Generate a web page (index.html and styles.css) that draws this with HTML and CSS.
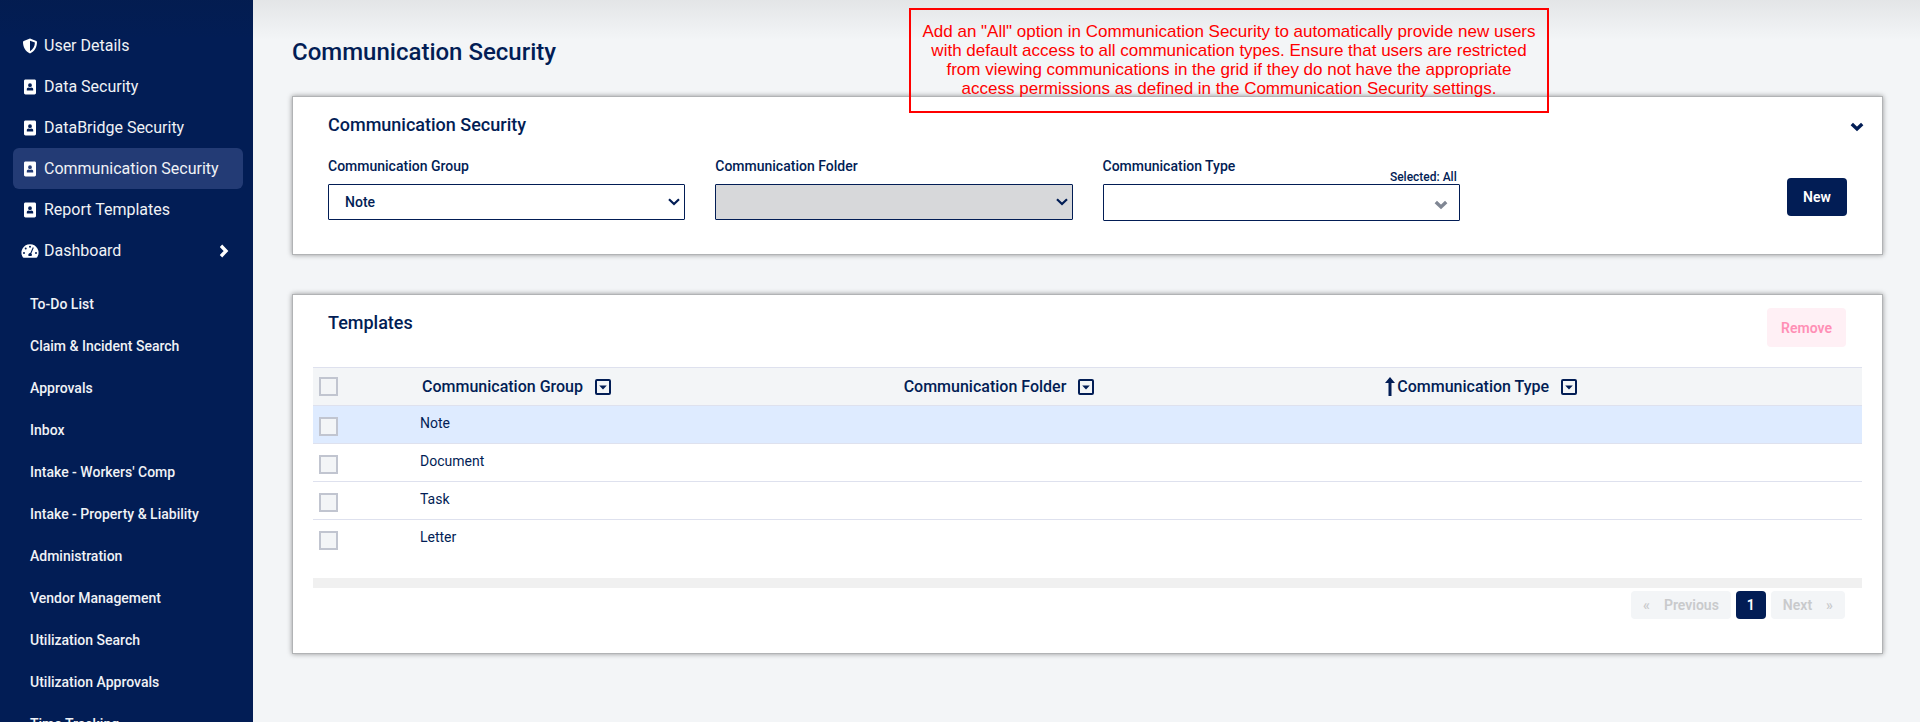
FILE: index.html
```html
<!DOCTYPE html>
<html lang="en">
<head>
<meta charset="utf-8">
<meta name="viewport" content="width=device-width, initial-scale=1">
<title>Communication Security</title>
<link rel="stylesheet" href="styles.css">
</head>
<body>
<svg class="sprite" aria-hidden="true">
  <symbol id="i-shield" viewBox="0 0 16 16"><path fill="currentColor" fill-rule="evenodd" d="M8 .5 14.300 3c.5.200.7.500.7 1 0 5-2.300 9.300-7 11.500C3.300 13.300 1 9 1 4c0-.5.2-.8.7-1zM8 2.700v10.600c3.200-1.800 4.800-5 4.900-8.700z"/></symbol>
  <symbol id="i-badge" viewBox="0 0 12 16"><path fill="currentColor" fill-rule="evenodd" d="M1.500.5h9c.8 0 1.500.6 1.500 1.400v12.200c0 .8-.7 1.400-1.500 1.400h-9C.7 15.500 0 14.900 0 14.100V1.900C0 1.100.7.500 1.500.500zM6 4.300a1.900 1.900 0 1 0 0 3.800 1.900 1.900 0 0 0 0-3.800zM4.800 8.600C3.500 8.600 2.800 9.400 2.800 10.400v1h6.400v-1c0-1-.7-1.800-2-1.800-.8.300-1.600.3-2.400 0z"/></symbol>
  <symbol id="i-gauge" viewBox="0 0 18 16"><path fill="currentColor" fill-rule="evenodd" d="M9 1.200a8.500 8.500 0 0 1 7.200 13c-.2.300-.5.500-.9.500H2.700c-.4 0-.7-.2-.9-.5A8.500 8.500 0 0 1 9 1.200zM9 2.800a1 1 0 1 0 0 2 1 1 0 0 0 0-2zM4.700 4.600a1 1 0 1 0 0 2 1 1 0 0 0 0-2zM3 8.900a1 1 0 1 0 0 2 1 1 0 0 0 0-2zM15 8.900a1 1 0 1 0 0 2 1 1 0 0 0 0-2zM11.800 4.300 9.300 10a2 2 0 0 0-1.700 3h2.900a2 2 0 0 0-.2-2.600l2.500-5.700z"/></symbol>
  <symbol id="i-chevron" viewBox="0 0 14 10"><path fill="none" stroke="currentColor" stroke-width="3.400" d="m1.800 2 5.200 5 5.200-5"/></symbol>
  <symbol id="i-filter" viewBox="0 0 16 16"><rect x="1" y="1" width="14" height="14" rx="1" fill="none" stroke="currentColor" stroke-width="2"/><path fill="currentColor" d="M4.200 6.500h7.600L8 10.500z"/></symbol>
  <symbol id="i-up" viewBox="0 0 10 20"><path fill="currentColor" d="M5 0 10 6H6.500v13h-3V6H0z"/></symbol>
</svg>
<div class="app">
  <aside class="sidebar">
    <nav class="nav" aria-label="Security">
      <a class="nav-link" href="#"><svg class="nav-icon"><use href="#i-shield"/></svg>User Details</a>
      <a class="nav-link" href="#"><svg class="nav-icon"><use href="#i-badge"/></svg>Data Security</a>
      <a class="nav-link" href="#"><svg class="nav-icon"><use href="#i-badge"/></svg>DataBridge Security</a>
      <a class="nav-link active" href="#" aria-current="page"><svg class="nav-icon"><use href="#i-badge"/></svg>Communication Security</a>
      <a class="nav-link" href="#"><svg class="nav-icon"><use href="#i-badge"/></svg>Report Templates</a>
      <a class="nav-link" href="#"><svg class="nav-icon"><use href="#i-gauge"/></svg>Dashboard<svg class="nav-more"><use href="#i-chevron"/></svg></a>
    </nav>
    <nav class="subnav" aria-label="Modules">
      <a href="#">To-Do List</a>
      <a href="#">Claim &amp; Incident Search</a>
      <a href="#">Approvals</a>
      <a href="#">Inbox</a>
      <a href="#">Intake - Workers' Comp</a>
      <a href="#">Intake - Property &amp; Liability</a>
      <a href="#">Administration</a>
      <a href="#">Vendor Management</a>
      <a href="#">Utilization Search</a>
      <a href="#">Utilization Approvals</a>
      <a href="#">Time Tracking</a>
    </nav>
  </aside>
  <main class="main">
    <h1 class="page-title">Communication Security</h1>
    <p class="note">Add an "All" option in Communication Security to automatically provide new users<br>with default access to all communication types. Ensure that users are restricted<br>from viewing communications in the grid if they do not have the appropriate<br>access permissions as defined in the Communication Security settings.</p>

    <section class="card">
      <header class="card-head">
        <h2 class="card-title">Communication Security</h2>
        <button class="collapse" type="button" aria-label="Collapse"><svg class="collapse-icon"><use href="#i-chevron"/></svg></button>
      </header>
      <form class="filters">
        <div class="field">
          <label class="label" for="group">Communication Group</label>
          <select class="select" id="group"><option>Note</option></select>
        </div>
        <div class="field">
          <label class="label" for="folder">Communication Folder</label>
          <select class="select" id="folder" disabled><option></option></select>
        </div>
        <div class="field">
          <label class="label" for="type">Communication Type</label>
          <span class="selected">Selected: All</span>
          <select class="select multi" id="type"><option></option></select>
        </div>
        <button class="btn new" type="button">New</button>
      </form>
    </section>

    <section class="card">
      <header class="card-head">
        <h2 class="card-title">Templates</h2>
        <button class="btn remove" type="button" disabled>Remove</button>
      </header>
      <div class="table-wrap">
        <table class="table">
          <thead>
            <tr>
              <th class="check"><input type="checkbox" aria-label="Select all"></th>
              <th><span class="th">Communication Group<button class="filter" type="button" aria-label="Filter group"><svg><use href="#i-filter"/></svg></button></span></th>
              <th><span class="th">Communication Folder<button class="filter" type="button" aria-label="Filter folder"><svg><use href="#i-filter"/></svg></button></span></th>
              <th><span class="th"><svg class="sort"><use href="#i-up"/></svg>Communication Type<button class="filter" type="button" aria-label="Filter type"><svg><use href="#i-filter"/></svg></button></span></th>
            </tr>
          </thead>
          <tbody>
            <tr class="current"><td class="check"><input type="checkbox" aria-label="Select Note"></td><td>Note</td><td></td><td></td></tr>
            <tr><td class="check"><input type="checkbox" aria-label="Select Document"></td><td>Document</td><td></td><td></td></tr>
            <tr><td class="check"><input type="checkbox" aria-label="Select Task"></td><td>Task</td><td></td><td></td></tr>
            <tr><td class="check"><input type="checkbox" aria-label="Select Letter"></td><td>Letter</td><td></td><td></td></tr>
          </tbody>
        </table>
        <div class="track"></div>
      </div>
      <nav class="pager" aria-label="Pages">
        <button class="page" type="button" disabled><span>«</span>Previous</button>
        <button class="page on" type="button">1</button>
        <button class="page" type="button" disabled>Next<span>»</span></button>
      </nav>
    </section>
  </main>
</div>
</body>
</html>
```

FILE: styles.css
```css
:root {
  --navy: #021d55;
  --line: #dee1ee;
  --bg: #f3f5f7;
}
* { box-sizing: border-box; }
body {
  margin: 0;
  background: var(--bg);
  color: var(--navy);
  font-family: Roboto, "Liberation Sans", sans-serif;
  font-size: 14px;
}
body::before {
  content: "";
  position: absolute;
  inset: 0 0 auto;
  height: 40px;
  background: linear-gradient(rgba(20, 20, 20, .07), transparent);
  pointer-events: none;
}
button, select, input { font: inherit; color: inherit; margin: 0; }
button { border: 0; padding: 0; background: none; }
h1, h2, p { margin: 0; font-weight: 500; }
.sprite { display: none; }

.app { display: flex; height: 100vh; overflow: hidden; }

.sidebar {
  flex: 0 0 253px;
  overflow: hidden;
  padding: 25px 10px 0 13px;
  background: var(--navy);
  color: #f0f2f6;
}
.sidebar a { color: inherit; text-decoration: none; }
.nav { display: flex; flex-direction: column; }
.nav-link {
  display: flex;
  align-items: center;
  height: 41px;
  padding: 0 12px 0 8px;
  border-radius: 6px;
  font-size: 16px;
}
.nav-link.active { background: #233b75; }
.nav-icon { width: 18px; height: 16px; margin-right: 5px; color: #fff; }
.nav-more { width: 14px; height: 10px; margin-left: auto; color: #fff; transform: rotate(-90deg); }
.subnav { display: flex; flex-direction: column; padding: 12px 0 0 17px; }
.subnav a { line-height: 42px; white-space: nowrap; font-weight: 500; }

.main {
  position: relative;
  flex: 1;
  display: flex;
  flex-direction: column;
  gap: 39px;
  padding: 36px 37px 0 39px;
}
.page-title { font-size: 24px; line-height: 32px; margin-bottom: -11px; }
.note {
  position: absolute;
  top: 8px;
  left: 656px;
  width: 640px;
  padding: 12px 0 13px;
  border: 2px solid #f00;
  color: #f00;
  font: 17px/19px "Liberation Sans", Arial, sans-serif;
  text-align: center;
  white-space: nowrap;
}

.card {
  background: #fff;
  border: 1px solid #b1b3b5;
  box-shadow: 0 0 5px rgba(0, 0, 0, .4);
}
.card-head {
  display: flex;
  justify-content: space-between;
  align-items: flex-start;
  padding: 13px 36px 0 35px;
}
.card-title { font-size: 18px; line-height: 29px; }
.collapse { width: 14px; height: 29px; margin-right: -18px; padding-top: 4px; }
.collapse-icon { display: block; width: 14px; height: 10px; margin: auto; }

.filters {
  display: grid;
  grid-template-columns: repeat(4, 1fr);
  column-gap: 30px;
  padding: 17px 35px 33px;
}
.field { position: relative; }
.label { display: block; line-height: 20px; margin-bottom: 8px; font-weight: 500; }
.selected {
  position: absolute;
  top: 13px;
  right: 3px;
  font-size: 12px;
  line-height: 16px;
  font-weight: 500;
}
.select {
  display: block;
  width: 100%;
  height: 36px;
  padding: 0 16px;
  border: 1px solid var(--navy);
  border-radius: 1px;
  appearance: none;
  background: #fff url("data:image/svg+xml,%3Csvg xmlns='http://www.w3.org/2000/svg' width='12' height='8'%3E%3Cpath d='m1 1.200 5 4.800 5-4.800' fill='none' stroke='%23021d55' stroke-width='2.200'/%3E%3C/svg%3E") no-repeat right 4px center;
  font-weight: 500;
  opacity: 1;
}
.select:disabled { background-color: #d7d8da; }
.select.multi {
  height: 37px;
  background-image: url("data:image/svg+xml,%3Csvg xmlns='http://www.w3.org/2000/svg' width='14' height='10'%3E%3Cpath d='m1.800 2 5.200 5 5.200-5' fill='none' stroke='%23808794' stroke-width='3.400'/%3E%3C/svg%3E");
  background-position: right 11px top 15px;
}
.btn { border-radius: 4px; height: 38px; font-weight: 600; }
.new { justify-self: end; margin-top: 22px; width: 60px; background: var(--navy); color: #fff; }
.remove { height: 39px; width: 79px; background: #fff0f5; color: #ff8fb5; }

.table-wrap { padding: 20px 20px 0; }
.table { width: 100%; border-collapse: collapse; table-layout: fixed; }
.table tr { height: 38px; border-bottom: 1px solid var(--line); }
.table tbody tr:last-child { border-bottom: 0; }
.table thead tr { border-top: 1px solid var(--line); background: var(--bg); }
.table th { padding: 0 5px; font-size: 16px; font-weight: 500; text-align: left; }
.table td { padding: 7px 3px 0; line-height: 20px; vertical-align: top; }
.table .current { background: #deebff; }
.table .check { width: 104px; padding: 0 6px; vertical-align: middle; }
.table td.check { padding-top: 4px; }
.check input {
  display: block;
  width: 19px;
  height: 19px;
  appearance: none;
  background: #f3f5f7;
  border: 2px solid #c1c5d0;
}
.th { display: flex; align-items: center; }
.filter, .filter svg { display: block; width: 16px; height: 16px; }
.filter { margin-left: 12px; }
.sort { width: 10px; height: 20px; margin-right: 2px; }
.track { height: 10px; margin-top: 20px; background: #f0f0f0; }

.pager { display: flex; justify-content: flex-end; gap: 5px; padding: 3px 37px 34px; }
.page {
  display: flex;
  align-items: center;
  gap: 14px;
  height: 28px;
  padding: 0 12px;
  border-radius: 4px;
  background: var(--bg);
  color: #c9cacc;
  font-weight: 600;
}
.page.on { width: 30px; padding: 0; justify-content: center; background: var(--navy); color: #fff; }
```
